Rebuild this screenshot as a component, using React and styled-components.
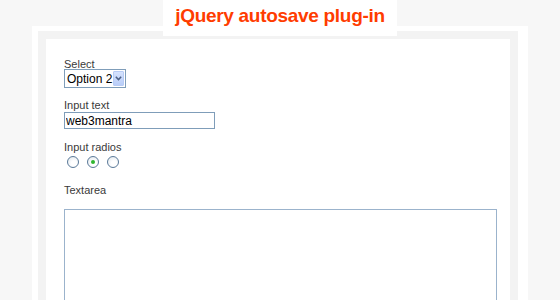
import React from "react";
import styled, { createGlobalStyle } from "styled-components";

const Global = createGlobalStyle`
  html, body { margin: 0; padding: 0; background: #f7f7f7; }
  body { font-family: "Liberation Sans", Arial, sans-serif; overflow: hidden; }
`;

const Page = styled.div`
  width: 560px;
  height: 300px;
  overflow: hidden;
`;

const Header = styled.div`
  display: flex;
  justify-content: center;
  position: relative;
  z-index: 1;
  height: 26px;
`;

const Title = styled.h1`
  margin: 0;
  width: 234px;
  height: 36px;
  background: #ffffff;
  color: #ff3c00;
  font: bold 19px/32px "Liberation Sans", Arial, sans-serif;
  letter-spacing: -0.3px;
  text-align: center;
  white-space: nowrap;
`;

const Outer = styled.div`
  width: 496px;
  margin: 0 auto;
  background: #ffffff;
  padding: 5px 10px 0 6px;
  box-sizing: border-box;
  height: 274px;
`;

const Frame = styled.div`
  background: #f3f3f3;
  padding: 8px 8px 0 8px;
  height: 100%;
  box-sizing: border-box;
`;

const Inner = styled.div`
  background: #ffffff;
  height: 100%;
  padding: 20px 0 0 18px;
  box-sizing: border-box;
`;

const Field = styled.div`
  margin-top: ${(p) => p.$top || 0}px;
`;

const Label = styled.div`
  font-size: 11px;
  line-height: 10px;
  height: 10px;
  color: #3a3a3a;
  white-space: nowrap;
  margin-bottom: ${(p) => p.$gap || 0}px;
`;

const FakeSelect = styled.div`
  width: 62px;
  height: 19px;
  box-sizing: border-box;
  border: 1px solid #7f9db9;
  display: flex;
  align-items: center;
  justify-content: space-between;
  padding: 0 1px 0 2px;
  font-size: 12px;
  color: #000;
  background: #fff;
  white-space: nowrap;
`;

const ArrowBtn = styled.span`
  flex: none;
  width: 11px;
  height: 15px;
  box-sizing: border-box;
  border: 1px solid #b7cbf5;
  border-radius: 1px;
  background: linear-gradient(#d6e3fe, #b9cdf8);
  display: flex;
  align-items: center;
  justify-content: center;
`;

const TextInput = styled.input`
  display: block;
  width: 151px;
  height: 17px;
  box-sizing: border-box;
  border: 1px solid #7f9db9;
  padding: 0 1px;
  margin: 0;
  font: 12px "Liberation Sans", Arial, sans-serif;
  color: #000;
  outline: none;
`;

const Radios = styled.div`
  display: flex;
  gap: 8px;
  padding-left: 3px;
`;

const Radio = styled.span`
  width: 12px;
  height: 12px;
  box-sizing: border-box;
  border-radius: 50%;
  border: 1px solid #5b7a99;
  background: radial-gradient(circle at 60% 65%, #ffffff 30%, #dde4ea 100%);
  display: flex;
  align-items: center;
  justify-content: center;
  &::after {
    content: "";
    width: 4px;
    height: 4px;
    border-radius: 50%;
    background: ${(p) => (p.$on ? "#2fb52f" : "transparent")};
  }
`;

const TextArea = styled.textarea`
  display: block;
  width: 433px;
  height: 160px;
  box-sizing: border-box;
  border: 1px solid #9bb3cc;
  margin: 0;
  resize: none;
  outline: none;
  font: 12px "Liberation Sans", Arial, sans-serif;
`;

export default function App() {
  return (
    <Page>
      <Global />
      <Header>
        <Title>jQuery autosave plug-in</Title>
      </Header>
      <Outer>
        <Frame>
          <Inner>
            <Field>
              <Label $gap={0}>Select</Label>
              <FakeSelect>
                <span>Option 2</span>
                <ArrowBtn>
                  <svg width="7" height="5" viewBox="0 0 7 5">
                    <path d="M0.8 0.8 L3.5 3.6 L6.2 0.8" fill="none" stroke="#4d6185" strokeWidth="1.5" />
                  </svg>
                </ArrowBtn>
              </FakeSelect>
            </Field>
            <Field $top={12}>
              <Label $gap={2}>Input text</Label>
              <TextInput defaultValue="web3mantra" />
            </Field>
            <Field $top={13}>
              <Label $gap={4}>Input radios</Label>
              <Radios>
                <Radio />
                <Radio $on />
                <Radio />
              </Radios>
            </Field>
            <Field $top={17}>
              <Label $gap={14}>Textarea</Label>
              <TextArea />
            </Field>
          </Inner>
        </Frame>
      </Outer>
    </Page>
  );
}
